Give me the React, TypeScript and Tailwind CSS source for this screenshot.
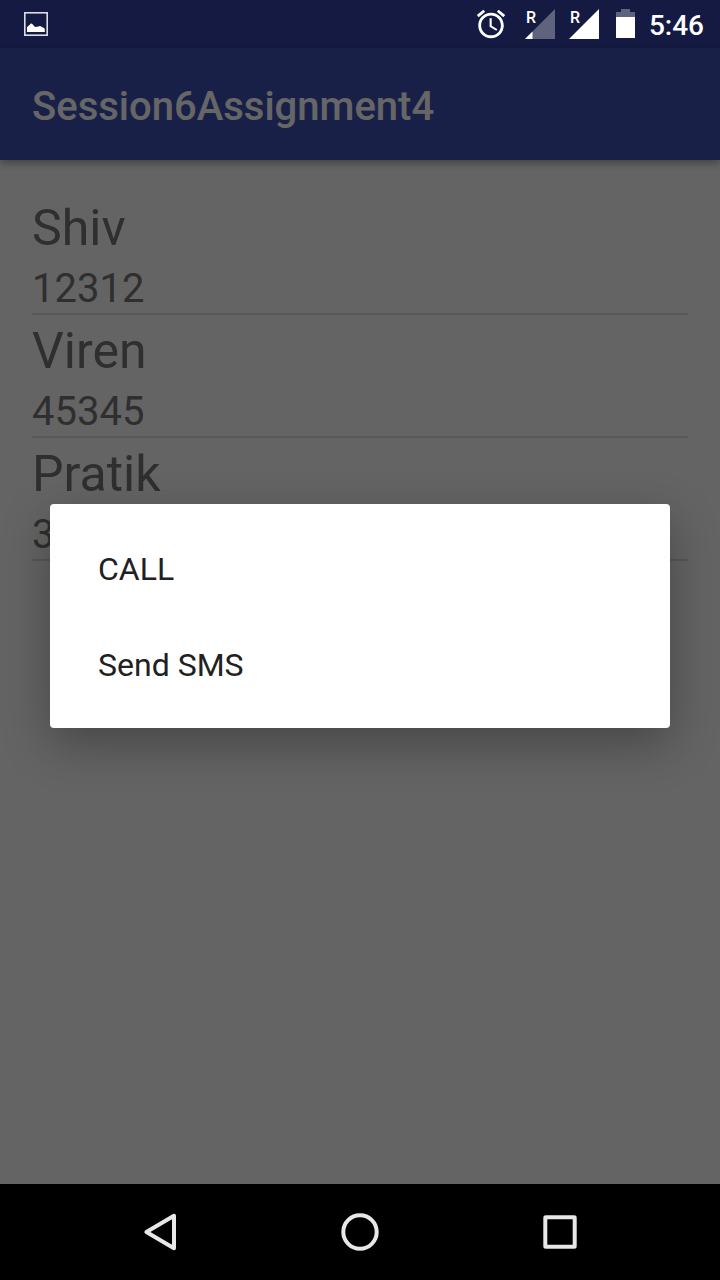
const contacts = [
  { name: "Shiv", phone: "12312" },
  { name: "Viren", phone: "45345" },
  { name: "Pratik", phone: "3" },
];

const actions = ["CALL", "Send SMS"];

function PictureIcon() {
  return (
    <svg className="h-6 w-6" viewBox="0 0 24 24" aria-hidden="true">
      <rect x="0.8" y="0.8" width="22.4" height="22.4" fill="none" stroke="#fff" strokeOpacity="0.85" strokeWidth="1.6" />
      <path d="M3 20V15.8C3 14.6 4.2 14.4 5 13.6L6.5 11.8Q7.3 11 8.1 11.8L11 15L14.5 14.5Q16 13.6 17.5 14.8C18.6 15.8 20.8 15.6 20.8 17.4V20Z" fill="#fff" />
    </svg>
  );
}

function AlarmIcon() {
  return (
    <svg className="h-[34px] w-[37px]" viewBox="0 0 26.1 24" fill="#fff" aria-hidden="true">
      <path d="M22 5.72l-4.6-3.86-1.29 1.53 4.6 3.86L22 5.72zM7.88 3.39L6.6 1.86 2 5.71l1.29 1.53 4.59-3.85zM12.5 8H11v6l4.75 2.85.75-1.23-4-2.37V8zM12 4c-4.97 0-9 4.03-9 9s4.02 9 9 9c4.97 0 9-4.03 9-9s-4.03-9-9-9zm0 16c-3.87 0-7-3.13-7-7s3.13-7 7-7 7 3.13 7 7-3.13 7-7 7z" />
    </svg>
  );
}

function Signal({ full }: { full?: boolean }) {
  return (
    <span className="relative block h-[30px] w-[30px]">
      <svg className="h-full w-full" viewBox="0 0 30 30" fill="#fff" aria-hidden="true">
        <path d="M0 30L30 0V30Z" fillOpacity={full ? 1 : 0.32} />
        {!full && <path d="M0 30L7.5 22.5V30Z" />}
      </svg>
      <span className="absolute top-px left-px text-[16px] leading-4 font-medium">R</span>
    </span>
  );
}

function BatteryIcon() {
  return (
    <svg className="h-[30px] w-[22px]" viewBox="0 0 22 30" fill="#fff" aria-hidden="true">
      <path d="M8 0H17V3H22V8H3V3H8Z" fillOpacity="0.32" />
      <path d="M3 8H22V29H3Z" />
    </svg>
  );
}

function StatusBar() {
  return (
    <div className="flex h-12 items-center justify-between bg-[#141a42] pr-4 pl-6 text-white">
      <PictureIcon />
      <div className="flex items-center gap-3.5">
        <AlarmIcon />
        <Signal />
        <Signal full />
        <BatteryIcon />
        <span className="pt-1 text-[28px] leading-8 font-medium">5:46</span>
      </div>
    </div>
  );
}

function NavigationBar() {
  return (
    <nav className="flex h-24 items-center justify-center gap-[104px] bg-black text-[#e8e8e8]">
      <button type="button" aria-label="Back" className="flex h-24 w-24 items-center justify-center">
        <svg className="h-12 w-12" viewBox="0 0 48 48" fill="none" stroke="currentColor" strokeWidth="4" strokeLinejoin="round" aria-hidden="true">
          <path d="M38 7.8V40.2L10.4 24Z" />
        </svg>
      </button>
      <button type="button" aria-label="Home" className="flex h-24 w-24 items-center justify-center">
        <svg className="h-12 w-12" viewBox="0 0 48 48" fill="none" stroke="currentColor" strokeWidth="4" aria-hidden="true">
          <circle cx="24" cy="24" r="16.7" />
        </svg>
      </button>
      <button type="button" aria-label="Recent apps" className="flex h-24 w-24 items-center justify-center">
        <svg className="h-12 w-12" viewBox="0 0 48 48" fill="none" stroke="currentColor" strokeWidth="4" strokeLinejoin="round" aria-hidden="true">
          <rect x="9.3" y="9.3" width="29.4" height="29.4" rx="0.5" />
        </svg>
      </button>
    </nav>
  );
}

export default function App() {
  return (
    <div className="flex min-h-screen flex-col font-['Roboto',sans-serif]">
      <StatusBar />
      <div className="relative flex grow flex-col bg-[#fafafa]">
        <header className="flex h-28 items-center bg-[#3f51b5] px-8 pt-1.5 text-white shadow-[0_3px_8px_rgba(0,0,0,0.35)]">
          <h1 className="text-[40px] leading-12 font-medium">Session6Assignment4</h1>
        </header>
        <main className="grow p-8">
          <ul>
            {contacts.map((contact) => (
              <li key={contact.name} className="border-b-2 border-[#dcdcdc] text-[#757575]">
                <p className="text-[50px] leading-[72px]">{contact.name}</p>
                <p className="text-[40px] leading-[49px]">{contact.phone}</p>
              </li>
            ))}
          </ul>
        </main>
        <div className="absolute inset-0 flex items-center justify-center bg-black/60 px-[50px]">
          <div
            role="dialog"
            aria-label="Contact actions"
            className="w-full rounded bg-white py-4 shadow-[0_16px_48px_rgba(0,0,0,0.3)]"
          >
            {actions.map((action) => (
              <button
                key={action}
                type="button"
                className="flex h-24 w-full items-center px-12 pt-0.5 text-left text-[32px] text-[#212121]"
              >
                {action}
              </button>
            ))}
          </div>
        </div>
      </div>
      <NavigationBar />
    </div>
  );
}
